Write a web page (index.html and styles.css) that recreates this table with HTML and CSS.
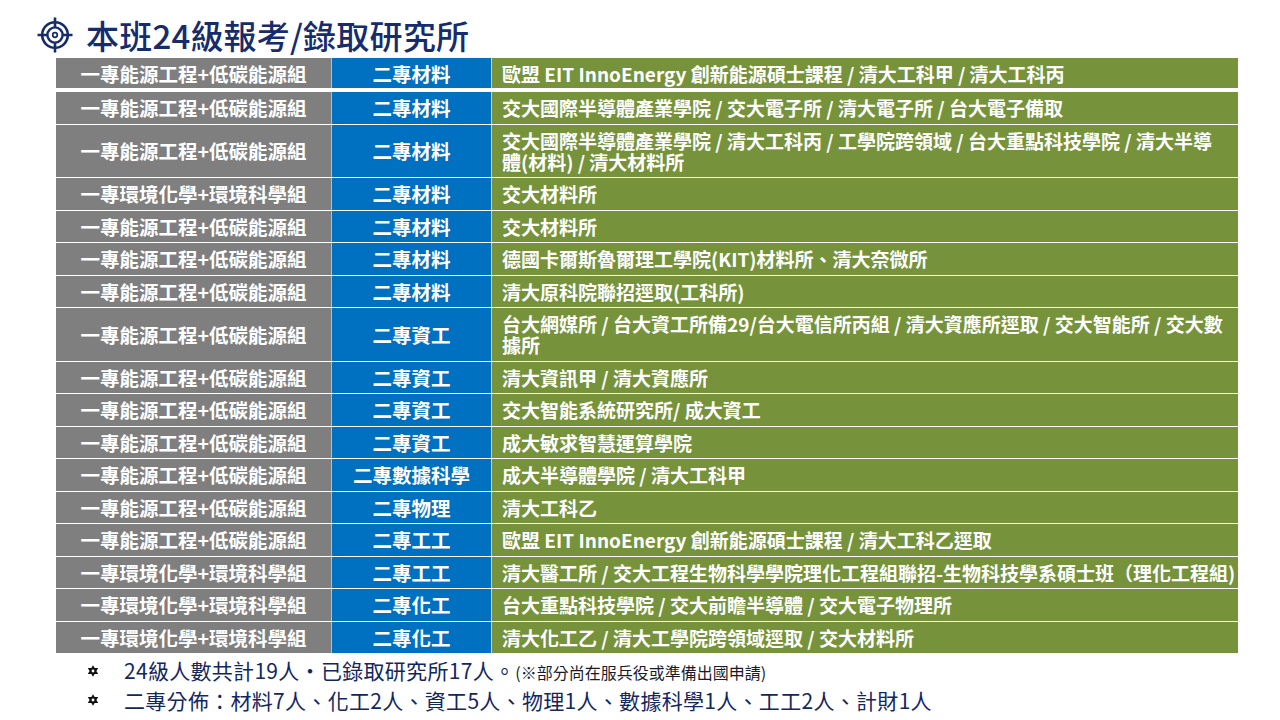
FILE: index.html
```html
<!DOCTYPE html>
<html lang="zh-Hant">
<head>
<meta charset="utf-8">
<title>本班24級報考/錄取研究所</title>
<link rel="stylesheet" href="styles.css">
</head>
<body>
<div class="slide">
  <header class="title-row">
    <svg class="target" viewBox="0 0 36 36" width="36" height="36">
      <circle cx="18" cy="18" r="12.8" fill="none" stroke="#172c6b" stroke-width="2.6"/>
      <circle cx="18" cy="18" r="7.6" fill="none" stroke="#172c6b" stroke-width="2.4"/>
      <circle cx="18" cy="18" r="2.3" fill="none" stroke="#172c6b" stroke-width="1.7"/>
      <path d="M18 0.5V10.6M18 25.4V35.5M0.5 18H10.6M25.4 18H35.5" stroke="#172c6b" stroke-width="2.6" fill="none"/>
    </svg>
    <h1 class="title">本班24級報考/錄取研究所</h1>
  </header>

  <div class="table">
    <div class="row first"><div class="c1">一專能源工程+低碳能源組</div><div class="c2">二專材料</div><div class="c3">歐盟 EIT InnoEnergy 創新能源碩士課程 / 清大工科甲 / 清大工科丙</div></div>
    <div class="row after-first"><div class="c1">一專能源工程+低碳能源組</div><div class="c2">二專材料</div><div class="c3">交大國際半導體產業學院 / 交大電子所 / 清大電子所 / 台大電子備取</div></div>
    <div class="row double"><div class="c1">一專能源工程+低碳能源組</div><div class="c2">二專材料</div><div class="c3">交大國際半導體產業學院 / 清大工科丙 / 工學院跨領域 / 台大重點科技學院 / 清大半導<br>體(材料) / 清大材料所</div></div>
    <div class="row"><div class="c1">一專環境化學+環境科學組</div><div class="c2">二專材料</div><div class="c3">交大材料所</div></div>
    <div class="row"><div class="c1">一專能源工程+低碳能源組</div><div class="c2">二專材料</div><div class="c3">交大材料所</div></div>
    <div class="row"><div class="c1">一專能源工程+低碳能源組</div><div class="c2">二專材料</div><div class="c3">德國卡爾斯魯爾理工學院(KIT)材料所、清大奈微所</div></div>
    <div class="row"><div class="c1">一專能源工程+低碳能源組</div><div class="c2">二專材料</div><div class="c3">清大原科院聯招逕取(工科所)</div></div>
    <div class="row double"><div class="c1">一專能源工程+低碳能源組</div><div class="c2">二專資工</div><div class="c3">台大網媒所 / 台大資工所備29/台大電信所丙組 / 清大資應所逕取 / 交大智能所 / 交大數<br>據所</div></div>
    <div class="row"><div class="c1">一專能源工程+低碳能源組</div><div class="c2">二專資工</div><div class="c3">清大資訊甲 / 清大資應所</div></div>
    <div class="row"><div class="c1">一專能源工程+低碳能源組</div><div class="c2">二專資工</div><div class="c3">交大智能系統研究所/ 成大資工</div></div>
    <div class="row"><div class="c1">一專能源工程+低碳能源組</div><div class="c2">二專資工</div><div class="c3">成大敏求智慧運算學院</div></div>
    <div class="row"><div class="c1">一專能源工程+低碳能源組</div><div class="c2">二專數據科學</div><div class="c3">成大半導體學院 / 清大工科甲</div></div>
    <div class="row"><div class="c1">一專能源工程+低碳能源組</div><div class="c2">二專物理</div><div class="c3">清大工科乙</div></div>
    <div class="row"><div class="c1">一專能源工程+低碳能源組</div><div class="c2">二專工工</div><div class="c3">歐盟 EIT InnoEnergy 創新能源碩士課程 / 清大工科乙逕取</div></div>
    <div class="row"><div class="c1">一專環境化學+環境科學組</div><div class="c2">二專工工</div><div class="c3">清大醫工所 / 交大工程生物科學學院理化工程組聯招-生物科技學系碩士班（理化工程組)</div></div>
    <div class="row"><div class="c1">一專環境化學+環境科學組</div><div class="c2">二專化工</div><div class="c3">台大重點科技學院 / 交大前瞻半導體 / 交大電子物理所</div></div>
    <div class="row"><div class="c1">一專環境化學+環境科學組</div><div class="c2">二專化工</div><div class="c3">清大化工乙 / 清大工學院跨領域逕取 / 交大材料所</div></div>
  </div>

  <ul class="notes">
    <li><svg class="star" viewBox="0 0 12 12" width="12" height="12"><path d="M6 0.2L11.2 9.1H0.8Z M6 11.8L0.8 2.9H11.2Z" fill="#111"/><circle cx="6" cy="6" r="1.4" fill="#fff"/></svg><span class="note-text">24級人數共計19人‧已錄取研究所17人。<small>(※部分尚在服兵役或準備出國申請)</small></span></li>
    <li><svg class="star" viewBox="0 0 12 12" width="12" height="12"><path d="M6 0.2L11.2 9.1H0.8Z M6 11.8L0.8 2.9H11.2Z" fill="#111"/><circle cx="6" cy="6" r="1.4" fill="#fff"/></svg><span class="note-text">二專分佈：材料7人、化工2人、資工5人、物理1人、數據科學1人、工工2人、計財1人</span></li>
  </ul>
</div>
</body>
</html>
```

FILE: styles.css
```css
html, body {
  margin: 0;
  padding: 0;
  background: #ffffff;
}

body {
  font-family: "Noto Sans CJK TC", "Noto Sans", "Liberation Sans", sans-serif;
  width: 1280px;
  height: 720px;
  overflow: hidden;
}

.slide {
  width: 1280px;
  height: 720px;
  box-sizing: border-box;
  padding-top: 15px;
}

.title-row {
  display: flex;
  align-items: center;
  gap: 13px;
  height: 40px;
  padding-left: 37px;
}

.target {
  flex: none;
  display: block;
}

.title {
  margin: 0;
  font-size: 33px;
  font-weight: 500;
  color: #172c6b;
  line-height: 40px;
  letter-spacing: 0.2px;
}

.table {
  margin: 3px 0 0 56px;
  width: 1182px;
}

.row {
  display: grid;
  grid-template-columns: 275px 160px 747px;
  height: 31.5px;
  border-top: 1px solid rgba(255, 255, 255, 0.75);
  color: #ffffff;
  font-size: 19px;
  font-weight: 700;
  line-height: 21px;
}

.row.first {
  height: 30px;
  border-top: 0;
}

.row.after-first {
  border-top: 4px solid #ffffff;
}

.row.double {
  height: 52.5px;
  line-height: 21px;
}

.c1, .c2, .c3 {
  display: flex;
  align-items: center;
  white-space: nowrap;
}

.c1 {
  background: #7f7f7f;
  justify-content: center;
  font-size: 19.5px;
}

.c2 {
  background: #0070c0;
  justify-content: center;
  font-size: 19.5px;
  border-left: 1px solid rgba(255, 255, 255, 0.6);
}

.c3 {
  background: #76933c;
  padding-left: 10px;
  border-left: 1px solid rgba(255, 255, 255, 0.6);
}

.notes {
  list-style: none;
  margin: 3px 0 0 0;
  padding: 0 0 0 87px;
  color: #12275f;
  font-size: 21px;
  line-height: 28px;
  letter-spacing: 0.3px;
}

.notes li {
  display: flex;
  align-items: center;
  gap: 25px;
}

.star {
  flex: none;
  display: block;
}

.note-text small {
  font-size: 16px;
  letter-spacing: 0;
  color: #1a1a2e;
}
```
